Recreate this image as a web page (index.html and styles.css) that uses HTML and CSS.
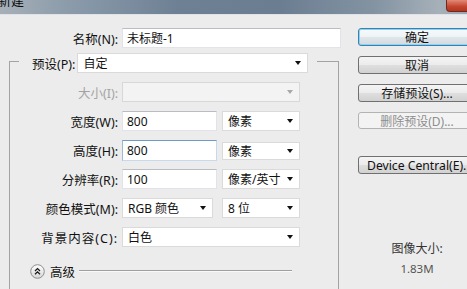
FILE: index.html
```html
<!DOCTYPE html>
<html lang="zh-CN">
<head>
<meta charset="utf-8">
<title>新建</title>
<link rel="stylesheet" href="styles.css">
</head>
<body>
<div class="window">
  <div class="titlebar">
    <span class="title">新建</span>
    <span class="close"></span>
  </div>
  <div class="content">
    <div class="main">
      <div class="name-row">
        <span class="name-label">名称(N):</span>
        <div class="field input name-field">未标题-1</div>
      </div>
      <div class="group">
        <div class="group-head">
          <span class="head-label">预设(P):</span>
          <div class="field select preset">自定<i class="caret"></i></div>
        </div>
        <div class="grid">
          <span class="lbl is-disabled">大小(I):</span>
          <div class="field select span2 off"><i class="caret"></i></div>

          <span class="lbl">宽度(W):</span>
          <div class="field input w1">800</div>
          <div class="field select w2">像素<i class="caret"></i></div>

          <span class="lbl">高度(H):</span>
          <div class="field input w1 focused">800</div>
          <div class="field select w2 low">像素<i class="caret"></i></div>

          <span class="lbl">分辨率(R):</span>
          <div class="field input w1">100</div>
          <div class="field select w2">像素/英寸<i class="caret"></i></div>

          <span class="lbl">颜色模式(M):</span>
          <div class="field select w1 narrow">RGB 颜色<i class="caret"></i></div>
          <div class="field select w2">8 位<i class="caret"></i></div>

          <span class="lbl wide">背景内容(C):</span>
          <div class="field select span2">白色<i class="caret"></i></div>
        </div>
        <div class="advanced">
          <svg class="adv-icon" width="15" height="15" viewBox="0 0 15 15">
            <defs>
              <linearGradient id="g" x1="0" y1="0" x2="0" y2="1">
                <stop offset="0" stop-color="#ffffff"/>
                <stop offset="1" stop-color="#d6d6d6"/>
              </linearGradient>
            </defs>
            <circle cx="7.5" cy="7.5" r="6.8" fill="url(#g)" stroke="#8d8d8d" stroke-width="1"/>
            <path d="M5 7 L7.5 4.6 L10 7 M5 10.2 L7.5 7.8 L10 10.2" fill="none" stroke="#1a1a1a" stroke-width="1.3"/>
          </svg>
          <span class="adv-text">高级</span>
          <span class="rule"></span>
        </div>
      </div>
    </div>
    <div class="side">
      <div class="btn default">确定</div>
      <div class="btn">取消</div>
      <div class="btn">存储预设(S)...</div>
      <div class="btn disabled">删除预设(D)...</div>
      <div class="btn device">Device Central(E)...</div>
      <div class="info">
        <div class="info-label">图像大小:</div>
        <div class="info-value">1.83M</div>
      </div>
    </div>
  </div>
</div>
</body>
</html>
```
FILE: styles.css
```css
html, body {
  margin: 0;
  padding: 0;
  overflow: hidden;
  background: #ececec;
}

body {
  width: 467px;
  height: 289px;
  font-family: "Noto Sans", "Noto Sans CJK SC", sans-serif;
  font-size: 12px;
  color: #111;
}

.window {
  width: 467px;
  height: 289px;
  overflow: hidden;
}

.titlebar {
  height: 14px;
  display: flex;
  justify-content: space-between;
  align-items: flex-start;
  overflow: hidden;
  background: linear-gradient(90deg, #a7b0b8 0%, #8c9cab 14%, #6e8194 38%, #6b7e91 60%, #8393a2 80%, #a6b0b9 94%, #9aa6b1 100%);
  border-bottom: 1px solid #dfe3e7;
}

.title {
  font-size: 13px;
  line-height: 13px;
  margin-top: -6px;
  margin-left: -2px;
  color: #0c0c0c;
}

.close {
  width: 20px;
  height: 11px;
  margin-top: -1px;
  border-bottom-left-radius: 4px;
  background: linear-gradient(#e28a76, #c4452f 60%, #b3361f);
  border: 1px solid #6e2a1e;
  border-right: none;
}

.content {
  display: flex;
}

.main {
  width: 358px;
  flex: 0 0 358px;
}

.name-row {
  display: flex;
  align-items: center;
  margin-top: 13px;
  height: 20px;
}

.name-label,
.head-label,
.lbl {
  font-size: 12.5px;
}

.name-label {
  width: 118px;
  text-align: right;
  margin-right: 4px;
}

.field {
  box-sizing: border-box;
  height: 20px;
  background: #fff;
  display: flex;
  align-items: center;
  white-space: nowrap;
}

.input {
  border: 1px solid #e2e3ea;
  border-top-color: #b9bcc4;
  padding-left: 4px;
}

.input.focused {
  height: 21px;
  border-color: #c5daed;
  border-top-color: #6f9bc6;
  border-left-color: #9dbbd8;
}

.select {
  border: 1px solid #dadada;
  padding: 0 6px 0 5px;
  justify-content: space-between;
}

.select.off {
  background: #f3f3f3;
  border-color: #d8d8d8;
  justify-content: flex-end;
}

.select.off .caret {
  border-top-color: #a8a8a8;
}

.caret {
  width: 0;
  height: 0;
  border-left: 3.5px solid transparent;
  border-right: 3.5px solid transparent;
  border-top: 4px solid #111;
}

.name-field {
  width: 219px;
}

.group {
  margin-top: 13px;
  margin-left: 9px;
  width: 330px;
  height: 300px;
  box-sizing: border-box;
  border: 1px solid #a3a3a3;
  border-bottom: none;
}

.group-head {
  margin-top: -9px;
  margin-left: 9px;
  width: 298px;
  display: flex;
  align-items: center;
  background: #ececec;
  padding-left: 13px;
  box-sizing: border-box;
}

.head-label {
  margin-right: 2px;
}

.preset {
  width: 231px;
}

.grid {
  margin-top: 9px;
  display: grid;
  grid-template-columns: 112px 100px 78px;
  grid-auto-rows: 20px;
  row-gap: 9px;
  align-items: center;
}

.lbl {
  text-align: right;
  padding-right: 4px;
}

.lbl.is-disabled {
  color: #a3a3a3;
}

.lbl.wide {
  letter-spacing: 1px;
}

.w1 {
  width: 95px;
}

.w1.narrow {
  width: 91px;
}

.w2 {
  width: 78px;
}

.w2.low {
  height: 18px;
  align-self: end;
}

.span2 {
  grid-column: 2 / span 2;
  width: 178px;
}

.advanced {
  display: flex;
  align-items: center;
  margin-top: 16px;
  padding-left: 20px;
  height: 16px;
}

.adv-icon {
  display: block;
}

.adv-text {
  margin-left: 5px;
  font-size: 12.5px;
}

.rule {
  flex: 1;
  height: 1px;
  background: #9f9f9f;
  border-bottom: 1px solid #fafafa;
  margin-left: 4px;
  margin-right: 46px;
}

.side {
  flex: 0 0 118px;
  width: 118px;
  padding-top: 13px;
  display: flex;
  flex-direction: column;
}

.btn {
  box-sizing: border-box;
  height: 18px;
  width: 118px;
  margin-bottom: 10px;
  border: 1px solid #707070;
  border-radius: 3px;
  background: linear-gradient(#f4f4f4 0%, #ececec 48%, #dedede 52%, #d2d2d2 100%);
  display: flex;
  align-items: center;
  justify-content: center;
  white-space: nowrap;
  color: #111;
  font-size: 12px;
}

.btn.default {
  border-color: #3d7fb0;
  box-shadow: inset 0 0 0 1px #8ad3f3;
  background: linear-gradient(#f6fafc 0%, #eef3f6 48%, #dfe6ea 52%, #d3dbe0 100%);
}

.btn.disabled {
  color: #8e8e8e;
  border-color: #b3b3b3;
  background: #f3f3f3;
  height: 17px;
}

.btn.device {
  margin-top: 17px;
  justify-content: flex-start;
  padding-left: 8px;
  font-size: 12.2px;
}

.info {
  margin-top: 58px;
  display: flex;
  flex-direction: column;
  align-items: center;
  line-height: 14px;
  color: #333;
}

.info-value {
  margin-top: 6px;
  color: #555;
  font-size: 11.5px;
}
```
